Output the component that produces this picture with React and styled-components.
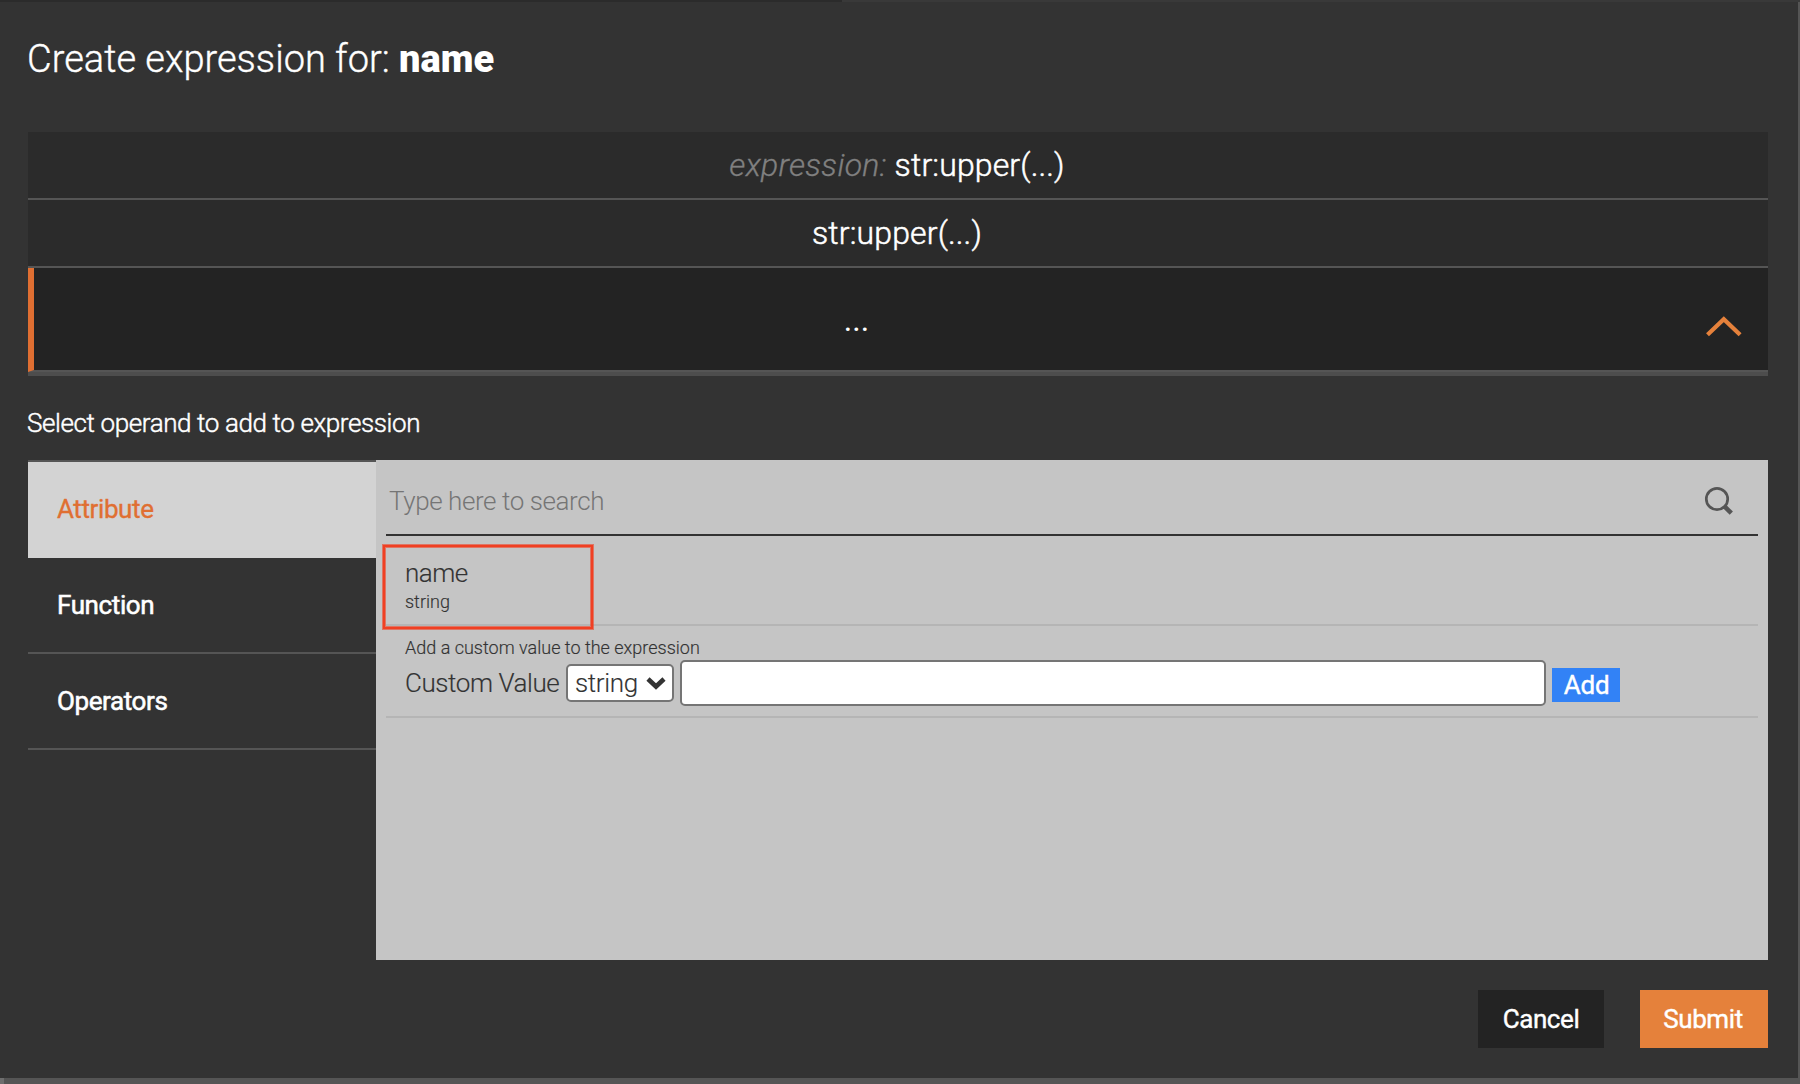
import React from "react";
import styled, { createGlobalStyle } from "styled-components";

const GlobalStyle = createGlobalStyle`
  *, *::before, *::after { box-sizing: border-box; }
  html, body { margin: 0; background: #333333; }
  body, input, button, select { font-family: Roboto, "Liberation Sans", sans-serif; }
`;

const Page = styled.div`
  display: grid;
  grid-template-columns: 1fr 2px;
  grid-template-rows: 2px 1fr 6px;
  width: 1800px;
  height: 1084px;
  overflow: hidden;
  background: #333333;
  color: #ffffff;
`;

const TopEdge = styled.div`
  grid-column: 1 / 3;
  background: linear-gradient(to right, #2b2b2b 842px, #393939 842px);
`;

const RightEdge = styled.div`
  background: #555555;
`;

const BottomEdge = styled.div`
  grid-column: 1 / 3;
  background: #555555;
  border-left: 4px solid #6e6e6e;
`;

const Dialog = styled.main`
  display: flex;
  flex-direction: column;
  padding: 0 30px 0 28px;
`;

const Title = styled.h1`
  margin: 0 0 0 -1px;
  height: 130px;
  padding-top: 34px;
  font-size: 38px;
  line-height: 46px;
  font-weight: 300;
  white-space: nowrap;
  -webkit-text-stroke: 0.35px currentColor;
  strong { font-weight: 900; -webkit-text-stroke: 0; }
`;

const Expressions = styled.section`
  border-bottom: 4px solid #4d4d4d;
`;

const ExpressionRow = styled.div`
  height: 68px;
  padding-right: 2px;
  border-bottom: 2px solid #555555;
  background: #2b2b2b;
  text-align: center;
  font-size: 32px;
  line-height: 66px;
  font-weight: 300;
  letter-spacing: 0.14px;
  white-space: pre;
  -webkit-text-stroke: 0.5px currentColor;
  em { color: #808080; letter-spacing: 0.28px; -webkit-text-stroke: 0.3px currentColor; }
`;

const ActiveRow = styled.div`
  display: flex;
  align-items: center;
  height: 104px;
  padding-right: 26px;
  border-bottom: 2px solid #555555;
  border-left: 6px solid #e06f32;
  background: #232323;
`;

const ActiveText = styled.span`
  flex: 1;
  padding: 2px 27px 0 0;
  text-align: center;
  font-size: 32px;
  line-height: 40px;
`;

const Chevron = styled.svg`
  width: 36px;
  height: 22px;
  margin-top: 16px;
`;

const Prompt = styled.p`
  margin: 0 0 0 -1px;
  height: 84px;
  padding-top: 31px;
  font-size: 26px;
  line-height: 32px;
  font-weight: 300;
  letter-spacing: -0.39px;
  -webkit-text-stroke: 0.45px currentColor;
`;

const Browser = styled.section`
  display: grid;
  grid-template-columns: 348px 1fr;
  height: 500px;
`;

const Tabs = styled.nav`
  border-top: 2px solid #555555;
`;

const Tab = styled.div`
  height: 96px;
  padding-left: 29px;
  border-bottom: 2px solid ${(p) => (p.$active ? "#d3d3d3" : "#555555")};
  background: ${(p) => (p.$active ? "#d3d3d3" : "transparent")};
  color: ${(p) => (p.$active ? "#e06f32" : "#ffffff")};
  font-size: 26px;
  line-height: 94px;
  font-weight: 400;
  letter-spacing: -0.4px;
  -webkit-text-stroke: ${(p) => (p.$active ? 0.35 : 0.55)}px currentColor;
`;

const Panel = styled.div`
  padding: 0 10px;
  background: #c5c5c5;
  color: #333333;
`;

const SearchBar = styled.div`
  display: flex;
  align-items: center;
  justify-content: space-between;
  height: 76px;
  padding: 0 24px 0 3px;
  border-bottom: 2px solid #333333;
`;

const SearchInput = styled.input`
  flex: 1;
  height: 40px;
  padding: 0;
  margin-top: 8px;
  border: 0;
  outline: 0;
  background: transparent;
  font-size: 26px;
  font-weight: 300;
  letter-spacing: -0.42px;
  &::placeholder { color: #757575; opacity: 1; }
`;

const SearchIcon = styled.svg`
  width: 30px;
  height: 30px;
  margin-top: 8px;
`;

const Item = styled.div`
  position: relative;
  height: ${(p) => p.$height}px;
  padding: ${(p) => p.$top}px 0 0 19px;
  border-bottom: 2px solid #b5b5b5;
`;

const ItemName = styled.div`
  font-size: 26px;
  line-height: 32px;
  font-weight: 300;
  letter-spacing: -0.5px;
  -webkit-text-stroke: 0.15px currentColor;
`;

const ItemNote = styled.div`
  padding-top: ${(p) => p.$shift || 0}px;
  font-size: 18px;
  line-height: 24px;
  font-weight: 300;
  -webkit-text-stroke: 0.15px currentColor;
`;

const Highlight = styled.div`
  position: absolute;
  left: -3px;
  top: 9px;
  width: 210px;
  height: 84px;
  border: 2px solid #f04023;
  box-shadow: 0 0 0 1px rgba(240, 64, 35, 0.6), inset 0 0 0 1px rgba(240, 64, 35, 0.6);
  z-index: 1;
`;

const ValueRow = styled.div`
  display: flex;
  align-items: center;
  height: 46px;
`;

const ValueLabel = styled.label`
  width: 161px;
  font-size: 26px;
  line-height: 32px;
  font-weight: 300;
  letter-spacing: -0.42px;
  -webkit-text-stroke: 0.15px currentColor;
`;

const TypeSelect = styled.div`
  display: flex;
  align-items: center;
  justify-content: space-between;
  width: 108px;
  height: 38px;
  padding: 0 6px 0 7px;
  border: 2px solid #757575;
  border-radius: 5px;
  background: #ffffff;
  font-size: 26px;
  font-weight: 300;
  letter-spacing: -0.35px;
  -webkit-text-stroke: 0.15px currentColor;
`;

const ValueInput = styled.input`
  width: 866px;
  height: 46px;
  margin: 0 6px;
  border: 2px solid #757575;
  border-radius: 5px;
  background: #ffffff;
`;

const AddButton = styled.button`
  width: 68px;
  height: 34px;
  margin-top: 4px;
  padding: 0 0 0 1px;
  border: 0;
  background: #3282f6;
  color: #ffffff;
  font-size: 26px;
  line-height: 34px;
  font-weight: 400;
  letter-spacing: -0.2px;
  -webkit-text-stroke: 0.4px currentColor;
`;

const Footer = styled.footer`
  display: flex;
  justify-content: flex-end;
  gap: 36px;
  padding-top: 30px;
`;

const FooterButton = styled.button`
  width: ${(p) => (p.$primary ? 128 : 126)}px;
  height: 58px;
  padding: 0 ${(p) => (p.$primary ? 2 : 0)}px 0 0;
  border: 0;
  background: ${(p) => (p.$primary ? "#e5813b" : "#232323")};
  color: #ffffff;
  font-size: 26px;
  font-weight: 400;
  letter-spacing: -0.4px;
  -webkit-text-stroke: 0.4px currentColor;
`;

export default function App() {
  return (
    <Page>
      <GlobalStyle />
      <TopEdge />
      <Dialog>
        <Title>
          Create expression for: <strong>name</strong>
        </Title>
        <Expressions>
          <ExpressionRow>
            <em>expression: </em>str:upper(...)
          </ExpressionRow>
          <ExpressionRow>str:upper(...)</ExpressionRow>
          <ActiveRow>
            <ActiveText>...</ActiveText>
            <Chevron viewBox="0 0 36 22">
              <path d="M1.5 18.8 L17.8 3.2 L34.1 18.8" fill="none" stroke="#e5813b" strokeWidth="4.2" />
            </Chevron>
          </ActiveRow>
        </Expressions>
        <Prompt>Select operand to add to expression</Prompt>
        <Browser>
          <Tabs>
            <Tab $active>Attribute</Tab>
            <Tab>Function</Tab>
            <Tab>Operators</Tab>
          </Tabs>
          <Panel>
            <SearchBar>
              <SearchInput placeholder="Type here to search" />
              <SearchIcon viewBox="0 0 30 30" fill="none" stroke="#555555">
                <circle cx="13" cy="13" r="10.7" strokeWidth="2.7" />
                <path d="M20.7 20.7 L27.3 27.2" strokeWidth="4.6" />
              </SearchIcon>
            </SearchBar>
            <Item $height={90} $top={21}>
              <Highlight />
              <ItemName>name</ItemName>
              <ItemNote $shift={1}>string</ItemNote>
            </Item>
            <Item $height={92} $top={10}>
              <ItemNote>Add a custom value to the expression</ItemNote>
              <ValueRow>
                <ValueLabel>Custom Value</ValueLabel>
                <TypeSelect>
                  string
                  <svg width="20" height="13" viewBox="0 0 20 13">
                    <path d="M2 2 L10 9.5 L18 2" fill="none" stroke="#333333" strokeWidth="4.6" />
                  </svg>
                </TypeSelect>
                <ValueInput aria-label="Custom Value" />
                <AddButton>Add</AddButton>
              </ValueRow>
            </Item>
          </Panel>
        </Browser>
        <Footer>
          <FooterButton>Cancel</FooterButton>
          <FooterButton $primary>Submit</FooterButton>
        </Footer>
      </Dialog>
      <RightEdge />
      <BottomEdge />
    </Page>
  );
}
